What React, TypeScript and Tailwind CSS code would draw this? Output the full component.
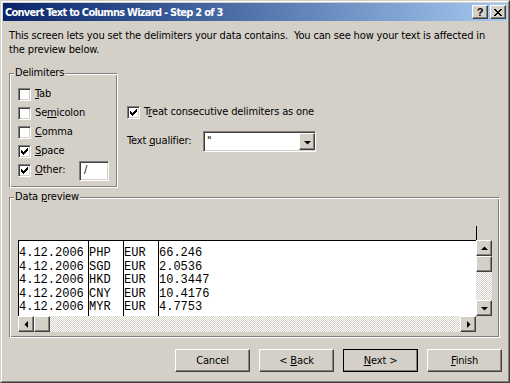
import React from "react";

const FONT = "font-['DejaVu_Sans_Condensed','DejaVu_Sans',sans-serif] font-stretch-condensed";
const RAISED =
  "border border-t-white border-l-white border-b-[#404040] border-r-[#404040] shadow-[inset_-1px_-1px_#808080,inset_1px_1px_#d4d0c8] bg-[#d4d0c8]";
const SUNKEN =
  "border border-t-[#808080] border-l-[#808080] border-b-white border-r-white shadow-[inset_1px_1px_#404040,inset_-1px_-1px_#d4d0c8] bg-white";
const ETCHED =
  "border border-t-[#808080] border-l-[#808080] border-b-white border-r-white shadow-[inset_1px_1px_white,inset_-1px_-1px_#808080]";
const TRACK =
  "bg-[repeating-conic-gradient(#d4d0c8_0_25%,#ffffff_0_50%)] bg-[length:2px_2px]";

function Check({ checked }: { checked?: boolean }) {
  return (
    <div className={`w-[13px] h-[13px] shrink-0 relative ${SUNKEN}`}>
      {checked && (
        <svg width="13" height="13" className="absolute -left-px -top-px" shapeRendering="crispEdges">
          {[
            [3, 5],
            [4, 6],
            [5, 7],
            [6, 6],
            [7, 5],
            [8, 4],
            [9, 3],
          ].map(([x, y]) => (
            <rect key={x} x={x} y={y} width="1" height="3" fill="black" />
          ))}
        </svg>
      )}
    </div>
  );
}

function Arrow({ dir }: { dir: "up" | "down" | "left" | "right" }) {
  const pts: Record<string, string> = {
    up: "4,9 11,9 7.5,5.5",
    down: "4,6 11,6 7.5,9.5",
    left: "9,4 9,11 5.5,7.5",
    right: "6,4 6,11 9.5,7.5",
  };
  return (
    <svg width="14" height="14" viewBox="0 0 14 14" className="block">
      <polygon points={pts[dir]} fill="black" />
    </svg>
  );
}

function ScrollBtn({ dir }: { dir: "up" | "down" | "left" | "right" }) {
  return (
    <div className={`w-[16px] h-[16px] shrink-0 flex items-center justify-center ${RAISED}`}>
      <Arrow dir={dir} />
    </div>
  );
}

function DelimRow({ checked, children }: { checked?: boolean; children: React.ReactNode }) {
  return (
    <div className="h-[19px] flex items-center">
      <Check checked={checked} />
      <span className="ml-[4px]">{children}</span>
    </div>
  );
}

function Btn({ children, def }: { children: React.ReactNode; def?: boolean }) {
  return (
    <div
      className={`w-[75px] h-[23px] flex items-center justify-center pt-[1px] ${
        def ? "outline outline-1 outline-black -outline-offset-1" : ""
      } ${RAISED}`}
    >
      <span className="whitespace-pre">{children}</span>
    </div>
  );
}

const rows = [
  ["4.12.2006", "PHP", "EUR", "66.246"],
  ["4.12.2006", "SGD", "EUR", "2.0536"],
  ["4.12.2006", "HKD", "EUR", "10.3447"],
  ["4.12.2006", "CNY", "EUR", "10.4176"],
  ["4.12.2006", "MYR", "EUR", "4.7753"],
];

export default function App() {
  return (
    <div className={`w-[510px] h-[383px] ${FONT} text-[11px] text-black tracking-[-0.15px]`}>
      <div className="w-full h-full border border-t-[#d4d0c8] border-l-[#d4d0c8] border-b-[#404040] border-r-[#404040]">
        <div className="w-full h-full border border-t-white border-l-white border-b-[#808080] border-r-[#808080] bg-[#d4d0c8] p-px flex flex-col">
          {/* Title bar */}
          <div className="h-[18px] flex items-center bg-gradient-to-r from-[#0a246a] to-[#a6caf0] pl-[2px] pr-[1px]">
            <span className="text-white font-bold leading-none flex-1 tracking-[-0.75px]">
              Convert Text to Columns Wizard - Step 2 of 3
            </span>
            <div className="flex gap-[2px]">
              <div className={`w-[16px] h-[14px] flex items-center justify-center ${RAISED}`}>
                <span className="font-bold text-[11px] leading-none font-['Liberation_Sans',sans-serif]">?</span>
              </div>
              <div className={`w-[16px] h-[14px] flex items-center justify-center ${RAISED}`}>
                <svg width="8" height="7" viewBox="0 0 8 7" shapeRendering="crispEdges">
                  <path d="M0 0h2l2 2.5L6 0h2L5 3.5 8 7H6L4 4.5 2 7H0l3-3.5z" fill="black" />
                </svg>
              </div>
            </div>
          </div>

          {/* Intro */}
          <div className="mt-[8px] ml-[6px] leading-[14px]">
            This screen lets you set the delimiters your data contains.&nbsp; You can see how your text is affected in
            <br />
            the preview below.
          </div>

          {/* Delimiters + options */}
          <div className="mt-[16px] ml-[6px] flex">
            <div className={`relative w-[109px] h-[115px] pt-[11px] pl-[8px] ${ETCHED}`}>
              <span className="absolute -top-[8px] left-[4px] bg-[#d4d0c8] px-px leading-[14px]">Delimiters</span>
              <DelimRow>
                <u>T</u>ab
              </DelimRow>
              <DelimRow>
                Se<u>m</u>icolon
              </DelimRow>
              <DelimRow>
                <u>C</u>omma
              </DelimRow>
              <DelimRow checked>
                <u>S</u>pace
              </DelimRow>
              <div className="h-[19px] flex items-center">
                <Check checked />
                <span className="ml-[4px] w-[44px]">
                  <u>O</u>ther:
                </span>
                <div className={`w-[30px] h-[20px] flex items-center pl-[4px] ${SUNKEN}`}>/</div>
              </div>
            </div>

            <div className="ml-[9px] pt-[33px] flex flex-col">
              <div className="flex items-center h-[13px]">
                <Check checked />
                <span className="ml-[4px]">
                  T<u>r</u>eat consecutive delimiters as one
                </span>
              </div>
              <div className="mt-[12px] flex items-center">
                <span className="w-[76px]">
                  Text <u>q</u>ualifier:
                </span>
                <div className={`w-[113px] h-[21px] flex items-center ${SUNKEN}`}>
                  <span className="flex-1 pl-[3px]">"</span>
                  <div className={`w-[16px] h-[17px] flex items-center justify-center ${RAISED}`}>
                    <Arrow dir="down" />
                  </div>
                </div>
              </div>
            </div>
          </div>

          {/* Data preview */}
          <div className={`relative mt-[9px] ml-[6px] w-[491px] h-[141px] pt-[28px] pl-[8px] ${ETCHED}`}>
            <span className="absolute -top-[8px] left-[4px] bg-[#d4d0c8] px-px leading-[14px]">
              Data <u>p</u>review
            </span>
            <div className="w-[459px] h-[14px] border-r border-black" />
            <div className="flex">
              <div className="w-[458px] h-[76px] bg-white border-t border-black flex font-['Liberation_Mono','Courier_New',monospace] text-[12px] leading-[13.5px] tracking-normal overflow-hidden">
                <div className="w-[70px] border-l border-black pt-[6px] whitespace-pre">
                  {rows.map((r, i) => (
                    <div key={i}>{r[0]}</div>
                  ))}
                </div>
                <div className="w-[35px] border-l border-black pt-[6px]">
                  {rows.map((r, i) => (
                    <div key={i}>{r[1]}</div>
                  ))}
                </div>
                <div className="w-[35px] border-l border-black pt-[6px]">
                  {rows.map((r, i) => (
                    <div key={i}>{r[2]}</div>
                  ))}
                </div>
                <div className="flex-1 border-l border-black pt-[6px]">
                  {rows.map((r, i) => (
                    <div key={i}>{r[3]}</div>
                  ))}
                </div>
              </div>
              <div className="w-[16px] h-[76px] flex flex-col">
                <ScrollBtn dir="up" />
                <div className={`w-[16px] h-[16px] ${RAISED}`} />
                <div className={`flex-1 ${TRACK}`} />
                <ScrollBtn dir="down" />
              </div>
            </div>
            <div className="w-[458px] h-[16px] flex">
              <ScrollBtn dir="left" />
              <div className={`w-[16px] h-[16px] ${RAISED}`} />
              <div className={`flex-1 ${TRACK}`} />
              <ScrollBtn dir="right" />
            </div>
          </div>

          {/* Buttons */}
          <div className="mt-[11px] flex justify-end gap-[9px] pr-[5px]">
            <Btn>Cancel</Btn>
            <Btn>
              {"< "}
              <u>B</u>ack
            </Btn>
            <Btn def>
              <u>N</u>ext &gt;
            </Btn>
            <Btn>
              <u>F</u>inish
            </Btn>
          </div>
        </div>
      </div>
    </div>
  );
}
